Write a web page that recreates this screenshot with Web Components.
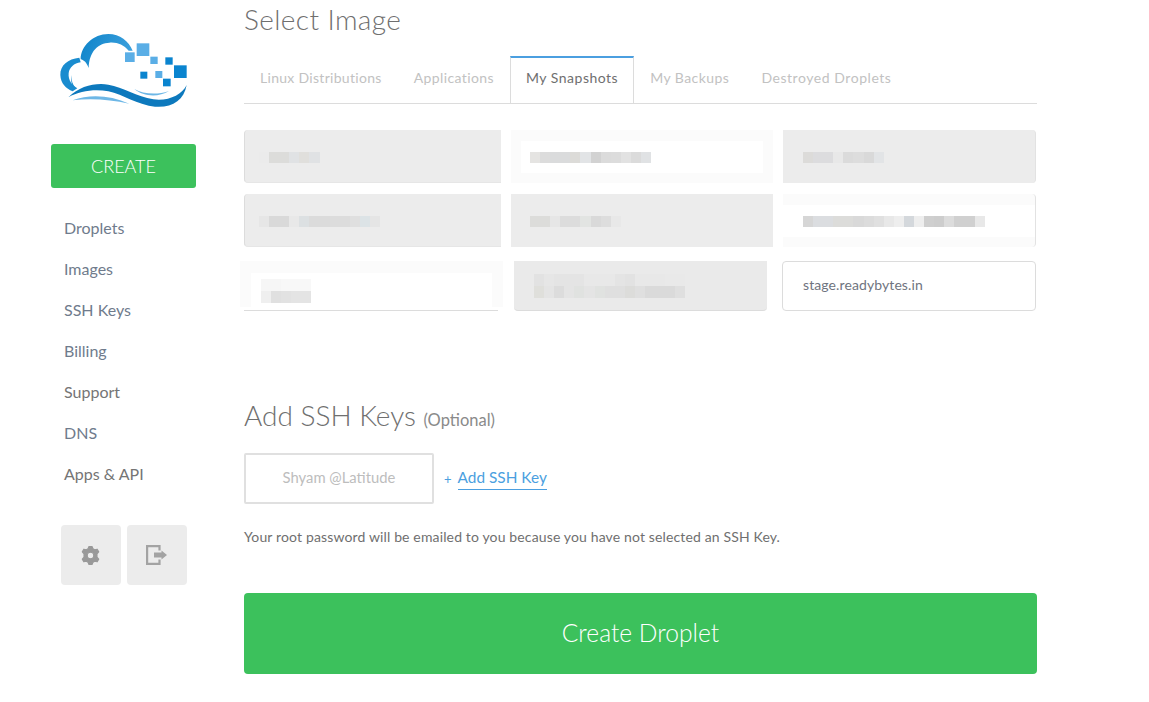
<!DOCTYPE html>
<html lang="en">
  <head>
    <meta charset="utf8" />
    <title>Create Droplet</title>
    <style>
      html, body {
        margin: 0;
        background: #fff;
        font-family: Lato, "Liberation Sans", sans-serif;
        color: #6f6f6f;
      }
      body {
        display: flex;
        height: 702px;
        overflow: hidden;
      }
    </style>
  </head>
  <body>
    <side-bar></side-bar>
    <main-panel></main-panel>

    <script>
      const define = (name, html) => {
        customElements.define(name, class extends HTMLElement {
          connectedCallback() {
            if (!this.shadowRoot) {
              this.attachShadow({ mode: "open" })
              this.shadowRoot.innerHTML = typeof html === "function" ? html(this) : html
            }
          }
        })
      }

      define("brand-logo", `
<style>
  :host { display: block; width: 170px; height: 100px; margin-left: -11px; }
  svg { display: block; }
</style>
<svg width="170" height="100" viewBox="0 0 510 300">
  <defs>
    <linearGradient id="arc" x1="0" y1="0" x2="1" y2="0.3">
      <stop offset="0" stop-color="#0d83c9"/><stop offset="1" stop-color="#3a9fdc"/>
    </linearGradient>
  </defs>
  <path fill="url(#arc)" d="M122 118C122 78 160 42 205 42C240 42 266 64 278 92L266 92C250 74 232 66 208 68C175 70 148 92 146 144C140 128 132 120 122 118Z"/>
  <path fill="#1a8ccf" d="M118 113C84 116 60 136 61 165C62 190 78 206 98 214L112 205C96 196 84 180 86 160C88 142 102 130 122 127Z"/>
  <path fill="#1a8ccf" d="M93 165C94 180 98 196 108 206L101 206C95 194 92 180 93 165Z"/>
  <path fill="#0d79bd" d="M85 232C120 198 165 188 205 194C250 201 290 230 340 238C385 244 425 225 440 195C432 242 395 264 345 260C295 256 250 224 205 214C165 207 120 212 85 232Z"/>
  <path fill="#6db7e6" d="M98 241C150 222 210 226 268 251C210 238 150 234 98 241Z"/>
  <path fill="#6db7e6" d="M283 207C310 222 350 226 387 213C355 233 310 230 283 207Z"/>
  <g fill="#5aaee6">
    <rect x="255" y="97" width="29" height="29"/>
    <rect x="290" y="70" width="38" height="38"/>
    <rect x="331" y="110" width="22" height="22"/>
    <rect x="346" y="153" width="21" height="21"/>
  </g>
  <g fill="#0a84cf">
    <rect x="376" y="112" width="22" height="22"/>
    <rect x="402" y="136" width="38" height="38"/>
    <rect x="301" y="155" width="21" height="21"/>
    <rect x="369" y="176" width="23" height="23"/>
  </g>
</svg>`)

      define("nav-item", `
<style>
  :host { display: block; height: 41px; line-height: 41px; font-size: 16px; padding-left: 13px; color: #6f7b8c; }
</style>
<slot></slot>`)

      define("icon-button", `
<style>
  :host { display: flex; width: 60px; height: 60px; align-items: center; justify-content: center; background: #ececec; border-radius: 4px; }
</style>
<slot></slot>`)

      define("side-bar", `
<style>
  :host { display: block; flex: none; width: 145px; padding: 20px 48px 0 51px; }
  .create {
    height: 44px; margin-top: 24px; margin-bottom: 20px; border-radius: 3px; background: #3cc15c; color: #fff;
    font-size: 18px; font-weight: 300; text-align: center; line-height: 44px;
  }
  nav-item:first-of-type { margin-top: -1px; }
  nav-item.dark { color: #757575; }
  .tools { display: flex; gap: 6px; margin: 31px 0 0 10px; }
  .gear { margin-right: 2px; }
</style>
<brand-logo></brand-logo>
<div class="create">CREATE</div>
<nav-item>Droplets</nav-item>
<nav-item>Images</nav-item>
<nav-item>SSH Keys</nav-item>
<nav-item>Billing</nav-item>
<nav-item class="dark">Support</nav-item>
<nav-item>DNS</nav-item>
<nav-item class="dark">Apps &amp; API</nav-item>
<div class="tools">
  <icon-button>
    <svg class="gear" width="21" height="21" viewBox="0 0 22 22">
      <path fill="#999" stroke="#999" stroke-width="1.2" stroke-linejoin="round" fill-rule="evenodd" d="M9.4 1.6H12.6L13.6 4L15.4 5L18 4.4L19.6 7.2L17.8 9.2V12.8L19.6 14.8L18 17.6L15.4 17L13.6 18L12.6 20.4H9.4L8.4 18L6.6 17L4 17.6L2.4 14.8L4.2 12.8V9.2L2.4 7.2L4 4.4L6.6 5L8.4 4ZM11 7.6A3.4 3.4 0 1 0 11 14.4A3.4 3.4 0 1 0 11 7.6Z"/>
    </svg>
  </icon-button>
  <icon-button>
    <svg width="22" height="20" viewBox="0 0 22 20">
      <path fill="none" stroke="#a3a3a3" stroke-width="2.2" d="M13.5 5.5V1.1H1.1V18.9H13.5V14.5"/>
      <path fill="#a3a3a3" d="M8 7.5H15.5V5.5L21 10L15.5 14.5V12.5H8Z"/>
    </svg>
  </icon-button>
</div>`)

      define("tab-item", `
<style>
  :host { display: block; flex: none; height: 40px; line-height: 40px; padding: 0 16px; font-size: 14px; letter-spacing: .4px; color: #c2c2c2; margin-top: 2px; }
  :host([active]) {
    height: 45px; margin: 0 0 -1px; padding: 0 15px; color: #6f6f6f; background: #fff; letter-spacing: .5px;
    border: 1px solid #dcdcdc; border-top: 2px solid #4b9fe0; border-bottom: 0;
  }
</style>
<slot></slot>`)

      define("tab-bar", `
<style>
  :host { display: flex; height: 47px; border-bottom: 1px solid #dcdcdc; margin-top: 20px; }
</style>
<slot></slot>`)

      // blurred name on a redacted card, drawn as a row of flat pixels
      define("pixel-strip", el => {
        const cells = el.getAttribute("cells").split(" ")
          .map(c => `<i style="background:#${c}"></i>`).join("")
        return `
<style>
  :host { display: flex; height: 11px; }
  i { display: block; flex: none; width: 10.1px; height: 100%; }
</style>${cells}`
      })

      define("snap-patch", `
<style>
  :host { display: flex; flex-direction: column; justify-content: center; flex: none; box-sizing: border-box; background: #ececec; }
  :host([faint]) { background: #fbfbfb; }
  :host([border]) { border-left: 1px solid #dcdcdc; border-bottom: 1px solid #e6e6e6; border-radius: 4px 0 0 4px; }
  :host([rim]) { border-right: 1px solid #e2e2e2; border-radius: 0 4px 4px 0; }
  .inner {
    display: flex; flex-direction: column; justify-content: center; box-sizing: border-box;
    padding: var(--top, 2px) 0 0 var(--pad, 14px); height: var(--inner, 100%);
    background: var(--fill, transparent); margin: var(--gap, 0) var(--edge, 0) 0 var(--edge, 0);
  }
</style>
<div class="inner"><slot></slot></div>`)

      define("snap-card", `
<style>
  :host {
    display: flex; align-items: center; flex: none; box-sizing: border-box; width: 254px; height: 50px;
    padding: 0 0 4px 20px; border: 1px solid #dcdcdc; border-radius: 4px; font-size: 14px; letter-spacing: .1px; color: #6f7480;
  }
</style>
<slot></slot>`)

      define("image-picker", `
<style>
  :host { display: flex; flex-direction: column; margin-top: 26px; }
  .row { display: flex; gap: 10px; height: 53px; margin-bottom: 11px; }
  .row.last { height: 50px; gap: 0; margin: 3px 0 0 -4px; }
  .white-card {
    width: 263px; margin-right: 11px; justify-content: flex-start;
    background:
      linear-gradient(#dcdcdc, #dcdcdc) no-repeat 4px 100% / 254px 1px,
      linear-gradient(#fbfbfb 46px, #fff 46px);
    --fill: #fff; --edge: 11px; --inner: 36px; --gap: 12px; --top: 0; --pad: 10px;
  }
  .grey-card {
    width: 253px; margin-right: 15px; background: #eaeaea; border-bottom: 1px solid #dcdcdc;
    border-radius: 0 0 4px 4px; --pad: 20px; --top: 0;
  }
  .stack { display: flex; flex-direction: column; }
  .stack pixel-strip { height: 12px; }
</style>
<div class="row">
  <snap-patch border style="width:257px;--pad:14px">
    <pixel-strip cells="ebebeb dcdcda dcdcda e0e2e4 e0dfdc e0e2e4"></pixel-strip>
  </snap-patch>
  <snap-patch faint style="width:262px;--fill:#fff;--edge:10px;--inner:32px;--pad:9px">
    <pixel-strip cells="e5e4e2 dcdcdc dadbdc dadbdc dcdbd8 e2e4e6 d2d2d2 dbdbdb dcdcdc e2e2e2 dbdbdb e0e2e4"></pixel-strip>
  </snap-patch>
  <snap-patch rim style="width:253px;--pad:20px">
    <pixel-strip cells="dcdbd9 dcdcde dcdcde e8e8e8 dbdbdb dddddd d9d9d9 e2e4e6"></pixel-strip>
  </snap-patch>
</div>
<div class="row">
  <snap-patch border style="width:257px;--pad:14px">
    <pixel-strip cells="e6e6e6 d9d9d9 d9d9d9 e8e8e8 dce0e2 dbdbdb dbdbdb dcdcdc dcdcdc dfdfdf dce3e6 e5e5e5"></pixel-strip>
  </snap-patch>
  <snap-patch style="width:262px;--pad:19px">
    <pixel-strip cells="dcdcda dcdcda e6e6e6 dcdcdc dcdcdc e2e4e2 d9d9d9 dddddd e8e8e8"></pixel-strip>
  </snap-patch>
  <snap-patch faint rim style="width:253px;--fill:#fff;--inner:32px;--pad:20px">
    <pixel-strip cells="d6d6d6 dbdde0 dbdde0 dcdcda dcdcda d9d9d9 dcdcdc e0e0e0 e8e8e8 eeeeee d4d8dc eeeeee cfcfcf cdcdcd dcdcdc d0d0d0 d0d0d0 e8e8e8"></pixel-strip>
  </snap-patch>
</div>
<div class="row last">
  <snap-patch class="white-card">
    <div class="stack">
      <pixel-strip cells="f6f6f6 f6f6f6 f8f8f8 f8f8f8 f8f8f8"></pixel-strip>
      <pixel-strip cells="efefef e0e0e0 e2e2e2 e4e4e4 e4e4e4"></pixel-strip>
    </div>
  </snap-patch>
  <snap-patch class="grey-card">
    <div class="stack">
      <pixel-strip cells="e2e2e2 e6e6e6 e4e4e4 e4e4e4 e4e4e4 e8e8e8 e8e8e8 e8e8e8 e4e4e4 e2e2e2 e8e8e8 e8e8e8 e8e8e8 e9e9e9 e9e9e9"></pixel-strip>
      <pixel-strip cells="dfdfdb e4e4e4 dcdcdc e4e4e4 e0e2e0 e4e4e4 e0e2e0 dfdfdf dfdfdf dcdcda dfdfdf dadada dadada dadada dfdfdf"></pixel-strip>
    </div>
  </snap-patch>
  <snap-card>stage.readybytes.in</snap-card>
</div>`)

      define("key-section", `
<style>
  :host { display: block; margin-top: 88px; }
  h2 { margin: 0; font-size: 28px; font-weight: 300; line-height: 32px; color: #6f6f6f; }
  small { font-size: 16.5px; font-weight: 400; color: #8a8a8a; }
  .keys { display: flex; align-items: center; margin-top: 17px; }
  .key {
    box-sizing: border-box; width: 190px; height: 51px; line-height: 45px; border: 2px solid #e0e0e0; border-radius: 2px;
    text-align: center; font-size: 14.8px; color: #bdbdbd;
  }
  .plus { margin-left: 10px; font-size: 13px; color: #4b9fe0; }
  .add { margin-left: 6px; padding-bottom: 3px; border-bottom: 1px solid #4b9fe0; font-size: 15.4px; color: #4b9fe0; }
  p { margin: 23px 0 0; font-size: 14px; letter-spacing: .14px; line-height: 20px; color: #6f6f6f; }
</style>
<h2>Add SSH Keys <small>(Optional)</small></h2>
<div class="keys">
  <div class="key">Shyam @Latitude</div>
  <span class="plus">+</span>
  <span class="add">Add SSH Key</span>
</div>
<p>Your root password will be emailed to you because you have not selected an SSH Key.</p>`)

      define("main-panel", `
<style>
  :host { display: block; flex: none; width: 793px; }
  h1 { margin: 0; padding-top: 3px; font-size: 28px; letter-spacing: .4px; font-weight: 300; line-height: 33px; color: #6f6f6f; }
  .submit {
    height: 81px; margin-top: 46px; border-radius: 4px; background: #3cc15c; color: #fff;
    font-size: 24.6px; font-weight: 300; text-align: center; line-height: 79px;
  }
</style>
<h1>Select Image</h1>
<tab-bar>
  <tab-item style="letter-spacing:.3px">Linux Distributions</tab-item>
  <tab-item>Applications</tab-item>
  <tab-item active>My Snapshots</tab-item>
  <tab-item style="letter-spacing:.45px">My Backups</tab-item>
  <tab-item style="letter-spacing:.55px">Destroyed Droplets</tab-item>
</tab-bar>
<image-picker></image-picker>
<key-section></key-section>
<div class="submit">Create Droplet</div>`)
    </script>
  </body>
</html>
